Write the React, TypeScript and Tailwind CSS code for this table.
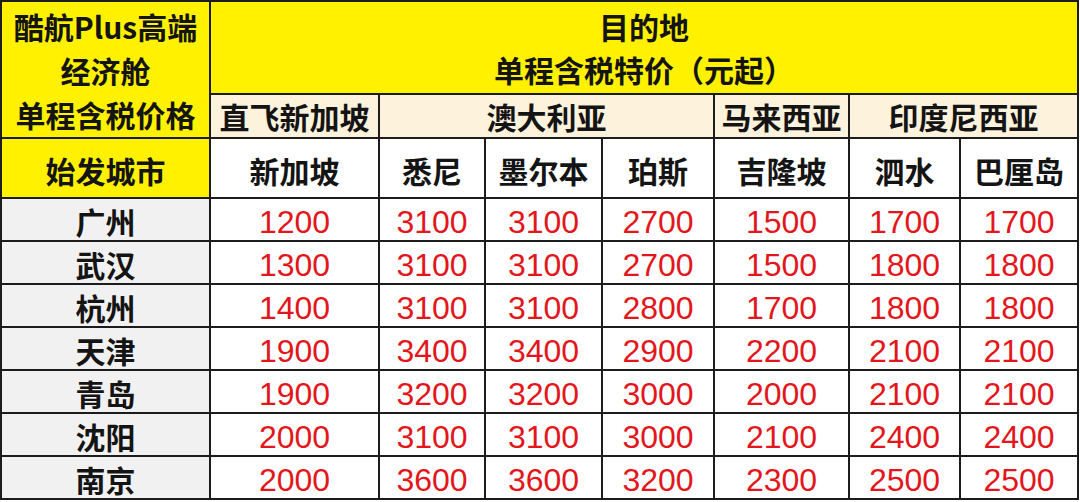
const CJK = "font-['Noto_Sans_CJK_SC','Noto_Sans',sans-serif]";

type Row = { city: string; prices: number[] };

const ROWS: Row[] = [
  { city: "广州", prices: [1200, 3100, 3100, 2700, 1500, 1700, 1700] },
  { city: "武汉", prices: [1300, 3100, 3100, 2700, 1500, 1800, 1800] },
  { city: "杭州", prices: [1400, 3100, 3100, 2800, 1700, 1800, 1800] },
  { city: "天津", prices: [1900, 3400, 3400, 2900, 2200, 2100, 2100] },
  { city: "青岛", prices: [1900, 3200, 3200, 3000, 2000, 2100, 2100] },
  { city: "沈阳", prices: [2000, 3100, 3100, 3000, 2100, 2400, 2400] },
  { city: "南京", prices: [2000, 3600, 3600, 3200, 2300, 2500, 2500] },
];

const CITIES = ["新加坡", "悉尼", "墨尔本", "珀斯", "吉隆坡", "泗水", "巴厘岛"];

const COL_WIDTHS = [209, 169, 106, 117, 112, 135, 111, 118];

const cell = "border-2 border-[#1c1c1c] p-0 text-center align-middle";

export default function App() {
  return (
    <div className="h-[502px] w-[1080px] overflow-hidden bg-white">
      <table
        className={`w-[1077px] table-fixed border-collapse ${CJK} text-[#141414]`}
      >
        <colgroup>
          {COL_WIDTHS.map((w, i) => (
            <col key={i} style={{ width: w }} />
          ))}
        </colgroup>
        <tbody>
          <tr className="h-[93px]">
            <td
              rowSpan={2}
              className={`${cell} bg-[#fff100] text-[30px] leading-[44px] font-bold`}
            >
              <div>酷航Plus高端</div>
              <div>经济舱</div>
              <div>单程含税价格</div>
            </td>
            <td
              colSpan={7}
              className={`${cell} bg-[#fff100] text-[30px] leading-[43px] font-bold`}
            >
              <div>目的地</div>
              <div>单程含税特价（元起）</div>
            </td>
          </tr>
          <tr className="h-[44px] bg-[#fdf2dc] text-[30px] leading-[32px] font-bold">
            <td className={cell}>直飞新加坡</td>
            <td colSpan={3} className={cell}>
              澳大利亚
            </td>
            <td className={cell}>马来西亚</td>
            <td colSpan={2} className={cell}>
              印度尼西亚
            </td>
          </tr>
          <tr className="h-[60px] text-[30px] leading-[32px] font-bold">
            <td className={`${cell} bg-[#fff100] pt-1`}>始发城市</td>
            {CITIES.map((c) => (
              <td key={c} className={`${cell} bg-white pt-1`}>
                {c}
              </td>
            ))}
          </tr>
          {ROWS.map((r) => (
            <tr key={r.city} className="h-[43px]">
              <td
                className={`${cell} bg-[#f1f1f1] pt-0.5 text-[30px] leading-[32px] font-bold`}
              >
                {r.city}
              </td>
              {r.prices.map((p, i) => (
                <td
                  key={i}
                  className={`${cell} bg-white pt-1 font-['Liberation_Sans',Arial,sans-serif] text-[32px] leading-[32px] text-[#e3161c]`}
                >
                  {p}
                </td>
              ))}
            </tr>
          ))}
        </tbody>
      </table>
    </div>
  );
}
